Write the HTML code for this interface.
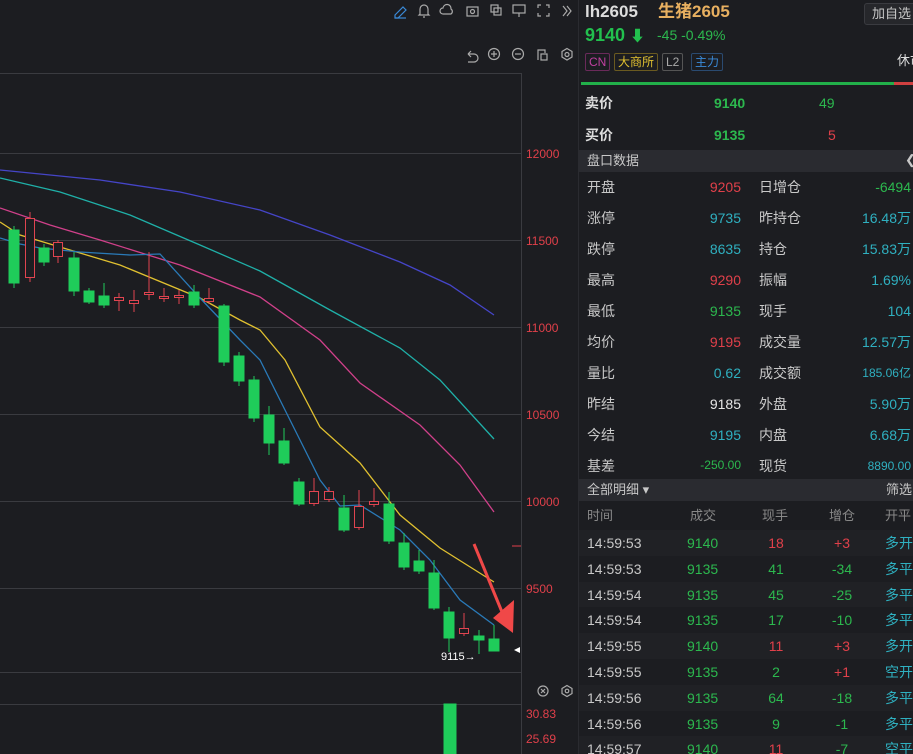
<!DOCTYPE html>
<html><head><meta charset="utf-8"><style>
*{margin:0;padding:0;box-sizing:border-box}
html,body{width:913px;height:754px;overflow:hidden}
body{background:#1c1d21;position:relative;font-family:"Liberation Sans","Noto Sans CJK SC",sans-serif;color:#c8c8c8}
.rp{position:absolute;left:578px;top:0;width:335px;height:754px;background:#1c1d21;border-left:1px solid #2a2b30;overflow:hidden}
.a{position:absolute;white-space:nowrap;line-height:1.2}
.r{color:#e0404a}.g{color:#2cb84e}.c{color:#2fb0c0}.w{color:#e6e6e6}
.tag{position:absolute;top:53px;height:18px;font-size:12px;line-height:16px;padding:0 3px;border:1px solid;border-radius:2px}
.row{position:absolute;left:0;width:335px;height:31px;font-size:14px}
.hd{position:absolute;left:0;width:335px;height:22px;background:#2a2b30;font-size:13px}
.tr{position:absolute;left:0;width:335px;height:25.8px;font-size:14px;line-height:26px}
.tr .a{line-height:26px}
</style></head><body>
<svg width="578" height="754" style="position:absolute;left:0;top:0">
<g stroke="#3a3b40" stroke-width="1">
<line x1="0" y1="73.5" x2="521" y2="73.5"/>
<line x1="0" y1="153.5" x2="521" y2="153.5"/>
<line x1="0" y1="240.5" x2="521" y2="240.5"/>
<line x1="0" y1="327.5" x2="521" y2="327.5"/>
<line x1="0" y1="414.5" x2="521" y2="414.5"/>
<line x1="0" y1="501.5" x2="521" y2="501.5"/>
<line x1="0" y1="588.5" x2="521" y2="588.5"/>
<line x1="0" y1="672.5" x2="521" y2="672.5"/>
<line x1="0" y1="704.5" x2="521" y2="704.5"/>
<line x1="521.5" y1="73" x2="521.5" y2="754"/>
</g>
<g font-size="12" fill="#e0404a" font-family="Liberation Sans">
<text x="526" y="158">12000</text><text x="526" y="245">11500</text><text x="526" y="332">11000</text>
<text x="526" y="419">10500</text><text x="526" y="506">10000</text><text x="526" y="593">9500</text>
<text x="526" y="718">30.83</text><text x="526" y="743">25.69</text>
</g>
<line x1="512" y1="546" x2="521" y2="546" stroke="#e0404a"/>
<g fill="none" stroke-width="1.3">
<polyline stroke="#4545c8" points="0,170 100,180 180,192 260,210 330,235 400,262 450,285 494,315"/>
<polyline stroke="#1fb0a8" points="0,178 60,192 130,215 200,245 260,271 330,310 400,348 440,380 494,439"/>
<polyline stroke="#d0408a" points="0,208 50,225 100,240 180,265 260,297 320,340 360,383 420,425 460,465 494,512"/>
<polyline stroke="#e0c030" points="0,222 20,235 60,247 120,265 200,298 240,320 260,330 285,360 320,427 360,463 400,515 440,548 494,582"/>
<polyline stroke="#2a7ab8" points="0,238 20,244 40,248 80,252 130,255 160,254 200,298 240,340 260,360 280,400 300,440 320,480 340,506 360,505 400,530 430,560 460,600 494,625"/>
</g>
<g stroke="#1fcc5a" fill="#1fcc5a">
<line x1="14" y1="226" x2="14" y2="288"/><rect x="9" y="230" width="10" height="53"/>
<line x1="44" y1="244" x2="44" y2="266"/><rect x="39" y="248" width="10" height="14"/>
<line x1="74" y1="252" x2="74" y2="296"/><rect x="69" y="258" width="10" height="33"/>
<line x1="89" y1="288" x2="89" y2="304"/><rect x="84" y="291" width="10" height="11"/>
<line x1="104" y1="283" x2="104" y2="308"/><rect x="99" y="296" width="10" height="9"/>
<line x1="194" y1="285" x2="194" y2="308"/><rect x="189" y="292" width="10" height="13"/>
<line x1="224" y1="304" x2="224" y2="366"/><rect x="219" y="306" width="10" height="56"/>
<line x1="239" y1="352" x2="239" y2="386"/><rect x="234" y="356" width="10" height="25"/>
<line x1="254" y1="376" x2="254" y2="422"/><rect x="249" y="380" width="10" height="38"/>
<line x1="269" y1="406" x2="269" y2="455"/><rect x="264" y="415" width="10" height="28"/>
<line x1="284" y1="428" x2="284" y2="465"/><rect x="279" y="441" width="10" height="22"/>
<line x1="299" y1="478" x2="299" y2="506"/><rect x="294" y="482" width="10" height="22"/>
<line x1="344" y1="495" x2="344" y2="532"/><rect x="339" y="508" width="10" height="22"/>
<line x1="389" y1="492" x2="389" y2="544"/><rect x="384" y="504" width="10" height="37"/>
<line x1="404" y1="533" x2="404" y2="570"/><rect x="399" y="543" width="10" height="24"/>
<line x1="419" y1="550" x2="419" y2="574"/><rect x="414" y="561" width="10" height="10"/>
<line x1="434" y1="560" x2="434" y2="610"/><rect x="429" y="573" width="10" height="35"/>
<line x1="449" y1="607" x2="449" y2="652"/><rect x="444" y="612" width="10" height="26"/>
<line x1="479" y1="630" x2="479" y2="654"/><rect x="474" y="636" width="10" height="4"/>
<line x1="494" y1="625" x2="494" y2="651"/><rect x="489" y="639" width="10" height="12"/>
<rect x="444" y="704" width="12" height="50"/>
</g>
<g stroke="#e04450" fill="#1c1d21">
<line x1="30" y1="212" x2="30" y2="282"/><rect x="25.5" y="218.5" width="9" height="59"/>
<line x1="58" y1="240" x2="58" y2="263"/><rect x="53.5" y="242.5" width="9" height="14"/>
<line x1="119" y1="293" x2="119" y2="311"/><rect x="114.5" y="297.5" width="9" height="3"/>
<line x1="134" y1="290" x2="134" y2="312"/><rect x="129.5" y="300.5" width="9" height="3"/>
<line x1="149" y1="252" x2="149" y2="300"/><rect x="144.5" y="292.5" width="9" height="2"/>
<line x1="164" y1="288" x2="164" y2="302"/><rect x="159.5" y="296.5" width="9" height="2"/>
<line x1="179" y1="290" x2="179" y2="304"/><rect x="174.5" y="295.5" width="9" height="2"/>
<line x1="209" y1="288" x2="209" y2="304"/><rect x="204.5" y="298.5" width="9" height="3"/>
<line x1="314" y1="478" x2="314" y2="506"/><rect x="309.5" y="491.5" width="9" height="12"/>
<line x1="329" y1="487" x2="329" y2="502"/><rect x="324.5" y="491.5" width="9" height="8"/>
<line x1="359" y1="490" x2="359" y2="530"/><rect x="354.5" y="506.5" width="9" height="21"/>
<line x1="374" y1="488" x2="374" y2="507"/><rect x="369.5" y="501.5" width="9" height="3"/>
<line x1="464" y1="613" x2="464" y2="636"/><rect x="459.5" y="628.5" width="9" height="5"/>
</g>
<line x1="474" y1="544" x2="502" y2="612" stroke="#f04848" stroke-width="3"/>
<polygon points="493,618 514,600 513,633" fill="#f04848"/>
<polygon points="514,650 520,647 520,653" fill="#fff"/>
<text x="441" y="660" font-size="11" fill="#fff" font-family="Liberation Sans">9115→</text>
<g fill="none" stroke="#aaa" stroke-width="1.2">
<path d="M395 15l8-8 3 3-8 8h-3z" stroke="#3a8ad8"/><line x1="395" y1="18" x2="406" y2="18" stroke="#3a8ad8"/>
<path d="M420 14v-5a4 4 0 018 0v5l1 1h-10z M423 17h2"/>
<path d="M443 14a3 3 0 010-6a4 4 0 018 1a3 3 0 010 5z"/>
<rect x="467" y="7" width="11" height="9"/><circle cx="472.5" cy="11.5" r="2"/>
<rect x="491" y="5" width="7" height="7"/><rect x="494" y="8" width="7" height="7"/>
<rect x="513" y="5" width="12" height="8"/><line x1="519" y1="13" x2="519" y2="17"/>
<path d="M538 8v-3h3M546 5h3v3M549 13v3h-3M541 16h-3v-3"/>
<path d="M563 6l4 5-4 5M567 6l4 5-4 5"/>
<path d="M468 54h6a4 4 0 010 8h-6M468 54l3-3M468 54l3 3"/>
<circle cx="494" cy="54" r="5.5"/><path d="M491 54h6M494 51v6"/>
<circle cx="518" cy="54" r="5.5"/><path d="M515 54h6"/>
<path d="M538 60v-10h7v3"/><rect x="541" y="54" width="6" height="6"/>
<path d="M567 48.5l5 3v5.5l-5 3-5-3v-5.5z"/><circle cx="567" cy="54.5" r="2"/>
<circle cx="543" cy="691" r="5"/><path d="M541 689l4 4M545 689l-4 4"/>
<path d="M567 685.5l5 3v5l-5 3-5-3v-5z"/><circle cx="567" cy="691" r="1.8"/>
</g>
</svg>
<div class="rp">
<div class="a w" style="left:6px;top:2px;font-size:17px;font-weight:bold;color:#ddd">lh2605</div>
<div class="a" style="left:79px;top:2px;font-size:17px;font-weight:bold;color:#e8b060">生猪2605</div>
<div class="a" style="left:285px;top:3px;width:52px;height:22px;border:1px solid #3a3b40;border-radius:3px;background:#26272b;font-size:13px;line-height:20px;padding-left:7px">加自选</div>
<div class="a g" style="left:6px;top:25px;font-size:18px;font-weight:bold;color:#22c04e">9140 <span style="font-size:15px">⬇</span></div>
<div class="a g" style="left:78px;top:27px;font-size:14px;color:#2cb84e">-45 -0.49%</div>
<div class="tag" style="left:6px;color:#c040a0;border-color:#6a2a5a">CN</div>
<div class="tag" style="left:35px;color:#e0c030;border-color:#6a5a20">大商所</div>
<div class="tag" style="left:83px;color:#aaa;border-color:#555">L2</div>
<div class="tag" style="left:112px;color:#3a8ad8;border-color:#2a4a70">主力</div>
<div class="a" style="left:318px;top:53px;font-size:13px;color:#ddd">休市</div>
<div class="a" style="left:2px;top:82px;width:313px;height:3px;background:#22b04a"></div>
<div class="a" style="left:315px;top:82px;width:20px;height:3px;background:#d04040"></div>
<div class="row" style="top:88px"><span class="a" style="left:6px;top:7px;font-weight:bold;color:#ddd">卖价</span><span class="a g" style="left:135px;top:7px;font-weight:bold">9140</span><span class="a g" style="left:240px;top:7px">49</span></div>
<div class="row" style="top:120px"><span class="a" style="left:6px;top:7px;font-weight:bold;color:#ddd">买价</span><span class="a g" style="left:135px;top:7px;font-weight:bold">9135</span><span class="a r" style="left:249px;top:7px">5</span></div>
<div class="hd" style="top:150px"><span class="a" style="left:8px;top:3px">盘口数据</span><span class="a" style="left:326px;top:2px">❮</span></div>
<div id="q"></div>
<div class="hd" style="top:479px"><span class="a" style="left:8px;top:3px">全部明细 ▾</span><span class="a" style="left:307px;top:3px">筛选</span></div>
<div class="a" style="left:8px;top:508px;font-size:13px;color:#888">时间</div>
<div class="a" style="left:111px;top:508px;font-size:13px;color:#888">成交</div>
<div class="a" style="left:183px;top:508px;font-size:13px;color:#888">现手</div>
<div class="a" style="left:250px;top:508px;font-size:13px;color:#888">增仓</div>
<div class="a" style="left:306px;top:508px;font-size:13px;color:#888">开平</div>
<div id="t"></div>
</div>
<script>
var q=[["开盘","9205","r","日增仓","-6494","g"],["涨停","9735","c","昨持仓","16.48万","c"],["跌停","8635","c","持仓","15.83万","c"],["最高","9290","r","振幅","1.69%","c"],["最低","9135","g","现手","104","c"],["均价","9195","r","成交量","12.57万","c"],["量比","0.62","c","成交额","185.06亿","c"],["昨结","9185","w","外盘","5.90万","c"],["今结","9195","c","内盘","6.68万","c"],["基差","-250.00","g","现货","8890.00","c"]];
var h="";q.forEach(function(r,i){var y=174+i*31;var sm=i==9?"font-size:12px;":"";var sm2=(i==6||i==9)?"font-size:12px;":"";
h+='<div class="a" style="left:8px;top:'+(y+5)+'px;font-size:14px">'+r[0]+'</div><div class="a '+r[2]+'" style="right:172px;top:'+(y+5)+'px;font-size:14px;'+sm+'">'+r[1]+'</div><div class="a" style="left:180px;top:'+(y+5)+'px;font-size:14px">'+r[3]+'</div><div class="a '+r[5]+'" style="right:2px;top:'+(y+5+(sm2?1:0))+'px;font-size:14px;'+sm2+'">'+r[4]+'</div>';});
document.getElementById("q").outerHTML=h;
var t=[["14:59:53","9140","18","r","+3","r","多开"],["14:59:53","9135","41","g","-34","g","多平"],["14:59:54","9135","45","g","-25","g","多平"],["14:59:54","9135","17","g","-10","g","多平"],["14:59:55","9140","11","r","+3","r","多开"],["14:59:55","9135","2","g","+1","r","空开"],["14:59:56","9135","64","g","-18","g","多平"],["14:59:56","9135","9","g","-1","g","多平"],["14:59:57","9140","11","r","-7","g","空平"]];
h="";t.forEach(function(r,i){var y=530+i*25.8;
h+='<div class="tr" style="top:'+y+'px;background:'+(i%2?'#1c1d21':'#202125')+'"><span class="a" style="left:8px">'+r[0]+'</span><span class="a g" style="left:108px">'+r[1]+'</span><span class="a '+r[3]+'" style="left:197px;transform:translateX(-50%)">'+r[2]+'</span><span class="a '+r[5]+'" style="left:263px;transform:translateX(-50%)">'+r[4]+'</span><span class="a c" style="left:306px">'+r[6]+'</span></div>';});
document.getElementById("t").outerHTML=h;
</script>
</body></html>
